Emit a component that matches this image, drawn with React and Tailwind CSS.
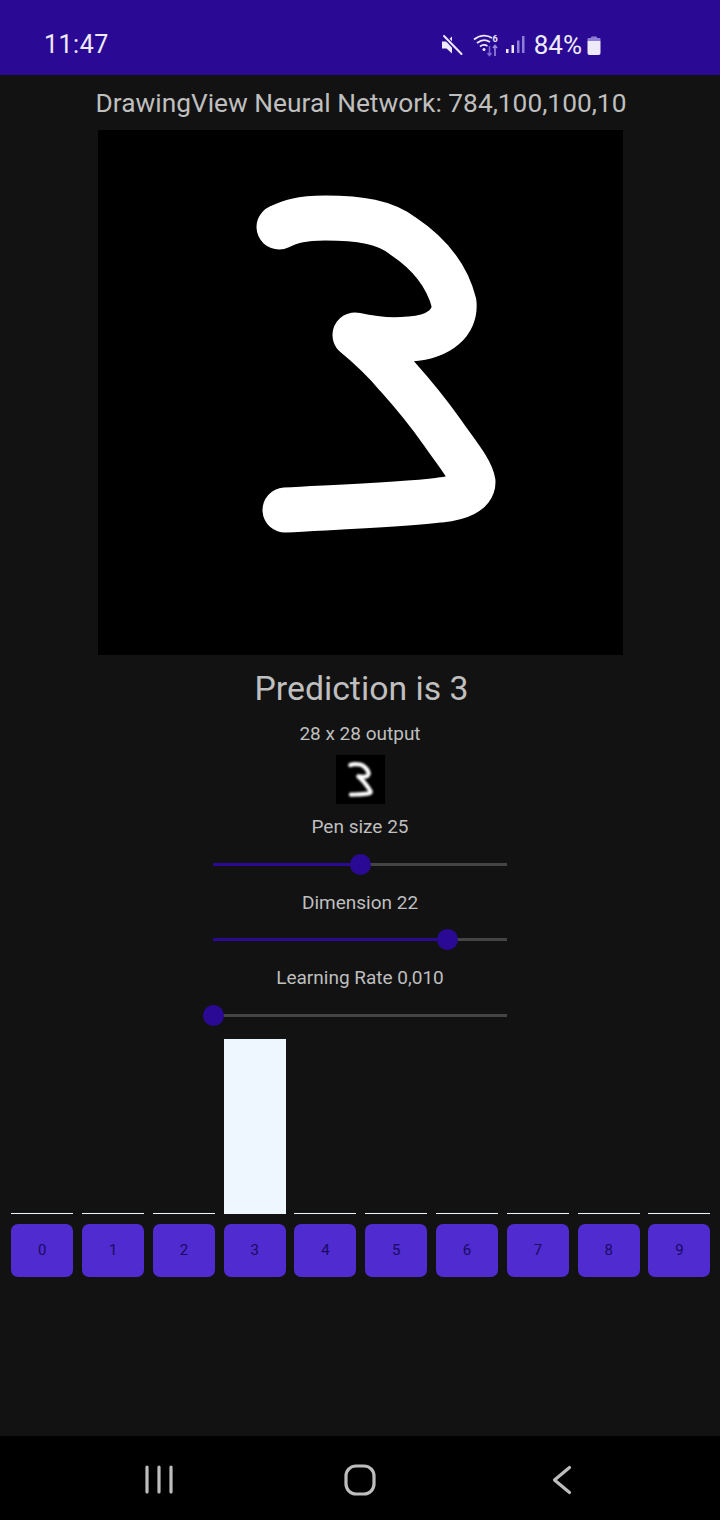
const DIGIT_PATH =
  'M279 227 C290 222 300 218 325 218 C360 218 385 222 403 236 C430 254 447 275 454 303 C456 322 440 337 410 339 C390 341 372 339 355 335 C372 349 385 362 397 376 C415 396 430 415 442 432 C458 455 471 470 473 482 C473 492 460 498 440 500 C400 505 340 507 285 510'

const SLIDERS = [
  { label: 'Pen size 25', pct: 50, labelGap: 'mt-[12px]', trackGap: 'mt-[7px]' },
  { label: 'Dimension 22', pct: 79.8, labelGap: 'mt-[7px]', trackGap: 'mt-[6px]' },
  { label: 'Learning Rate 0,010', pct: 0, labelGap: 'mt-[7px]', trackGap: 'mt-[7px]' },
]

const DIGITS = [0, 1, 2, 3, 4, 5, 6, 7, 8, 9]
const PREDICTION = 3

function StatusBar() {
  return (
    <div className="h-[75px] bg-[#2a0a94] flex items-center pt-[14px] pl-[44px] pr-[119px] text-[#efeafa]">
      <span className="text-[25px] leading-none tracking-[0.5px]">11:47</span>
      <div className="ml-auto flex items-center">
        <svg width="22" height="22" viewBox="0 0 22 22" className="mr-[9px]">
          <path d="M1 7.5h4.5L11 2.5v17l-5.5-5H1z" fill="#efeafa" />
          <path d="M2.5 1.5 20 20" stroke="#2a0a94" strokeWidth="4.5" />
          <path d="M3 2 20.5 20" stroke="#efeafa" strokeWidth="2" strokeLinecap="round" />
        </svg>
        <svg width="28" height="24" viewBox="0 0 26 24" fill="none" className="mr-[5px]">
          <path d="M1 6.5C7 1.5 14 1.5 19 5" stroke="#efeafa" strokeWidth="1.7" />
          <path d="M4 10C8.5 6.5 13 6.5 17 9" stroke="#efeafa" strokeWidth="1.7" />
          <path d="M7 13.5C9.5 11.5 12 11.5 14.5 13" stroke="#efeafa" strokeWidth="1.7" />
          <circle cx="11" cy="16.5" r="1.5" fill="#efeafa" />
          <text x="19.5" y="8.5" fontSize="9" fontWeight="700" fill="#efeafa" fontFamily="Roboto, sans-serif">6</text>
          <path d="M16.5 13v9M14.5 20l2 2.5 2-2.5" stroke="#7b68d0" strokeWidth="1.5" />
          <path d="M22 23v-10M20 15l2-2.5 2 2.5" stroke="#9c8de0" strokeWidth="1.5" />
        </svg>
        <svg width="20" height="20" viewBox="0 0 20 20" className="mr-[9px]">
          <rect x="1" y="14" width="2.5" height="4" fill="#efeafa" />
          <rect x="6.5" y="10" width="2.5" height="8" fill="#efeafa" />
          <rect x="12" y="5.5" width="2.5" height="12.5" fill="#8d7fd6" />
          <rect x="17" y="1" width="2.5" height="17" fill="#8d7fd6" />
        </svg>
        <span className="text-[26px] leading-none mr-[5px]">84%</span>
        <svg width="14" height="20" viewBox="0 0 14 20">
          <path d="M4 2.5a1 1 0 0 1 1-1h4a1 1 0 0 1 1 1V3H4z" fill="#8d7fd6" />
          <path d="M1.5 3h11a1 1 0 0 1 1 1v2H.5V4a1 1 0 0 1 1-1z" fill="#8d7fd6" />
          <path d="M.5 6h13v12a2 2 0 0 1-2 2h-9a2 2 0 0 1-2-2z" fill="#efeafa" />
        </svg>
      </div>
    </div>
  )
}

function Slider({ label, pct, labelGap, trackGap }) {
  return (
    <>
      <p className={`${labelGap} h-5 flex items-center text-[19px] leading-none text-[#bfbfbf]`}>{label}</p>
      <div className={`${trackGap} h-[42px] w-[294px] flex items-center`}>
        <div className="h-[3px] bg-[#2a0a94]" style={{ width: `${pct}%` }} />
        <div className="h-[21px] w-[21px] shrink-0 mx-[-10.5px] rounded-full bg-[#2a0a94] relative" />
        <div className="h-[3px] flex-1 bg-[#444444]" />
      </div>
    </>
  )
}

function BarChart() {
  return (
    <div className="mt-[3px] pl-[11.3px] pr-[9.5px] flex gap-[8.8px] w-full">
      {DIGITS.map((d) => (
        <div key={d} className="flex-1 flex flex-col justify-end h-[175px]">
          <div className={d === PREDICTION ? 'h-full bg-[#eef6ff]' : 'h-px bg-[#eef6ff]'} />
        </div>
      ))}
    </div>
  )
}

function DigitButtons() {
  return (
    <div className="mt-[10px] pl-[11.3px] pr-[9.5px] flex gap-[8.8px] w-full">
      {DIGITS.map((d) => (
        <button
          key={d}
          className="flex-1 h-[53px] rounded-[7px] bg-[#4f2bd0] text-[#1a0a60] text-[15px] flex items-center justify-center"
        >
          {d}
        </button>
      ))}
    </div>
  )
}

function NavBar() {
  return (
    <div className="mt-auto h-[84px] bg-black flex items-center justify-center">
      <svg width="720" height="84" viewBox="0 1436 720 84" fill="none" stroke="#bdbdbd" strokeWidth="3.2" strokeLinecap="round" strokeLinejoin="round">
        <path d="M147 1467v25M159 1467v25M171 1467v25" />
        <rect x="346" y="1466" width="28" height="28" rx="10" />
        <path d="M569.5 1467.5 554.5 1480l15 12.5" />
      </svg>
    </div>
  )
}

export default function App() {
  return (
    <div className="w-[720px] h-[1520px] bg-[#121212] flex flex-col font-['Roboto',sans-serif]">
      <StatusBar />
      <div className="flex flex-col items-center">
        <h1 className="h-[55px] pt-px pl-[2px] flex items-center text-[26.3px] font-normal leading-none text-[#bfbfbf] whitespace-nowrap">
          DrawingView Neural Network: 784,100,100,10
        </h1>
        <div className="w-[525px] h-[525px] bg-black">
          <svg width="525" height="525" viewBox="98 130 525 525" fill="none">
            <path d={DIGIT_PATH} stroke="#fff" strokeWidth="45" strokeLinecap="round" strokeLinejoin="round" />
          </svg>
        </div>
        <h2 className="h-[68px] pl-[3px] flex items-center text-[33.8px] font-normal leading-none text-[#bfbfbf]">Prediction is 3</h2>
        <p className="h-5 flex items-center text-[19px] leading-none text-[#bfbfbf]">28 x 28 output</p>
        <div className="mt-[12px] w-[49px] h-[49px] bg-black">
          <svg width="49" height="49" viewBox="142.5 131.5 467 467" fill="none">
            <defs>
              <filter id="mini-blur" x="-20%" y="-20%" width="140%" height="140%">
                <feGaussianBlur stdDeviation="8.5" />
              </filter>
            </defs>
            <path d={DIGIT_PATH} stroke="#ffffff" strokeWidth="40" strokeLinecap="round" strokeLinejoin="round" filter="url(#mini-blur)" />
          </svg>
        </div>
        {SLIDERS.map((s) => (
          <Slider key={s.label} {...s} />
        ))}
      </div>
      <BarChart />
      <DigitButtons />
      <NavBar />
    </div>
  )
}
